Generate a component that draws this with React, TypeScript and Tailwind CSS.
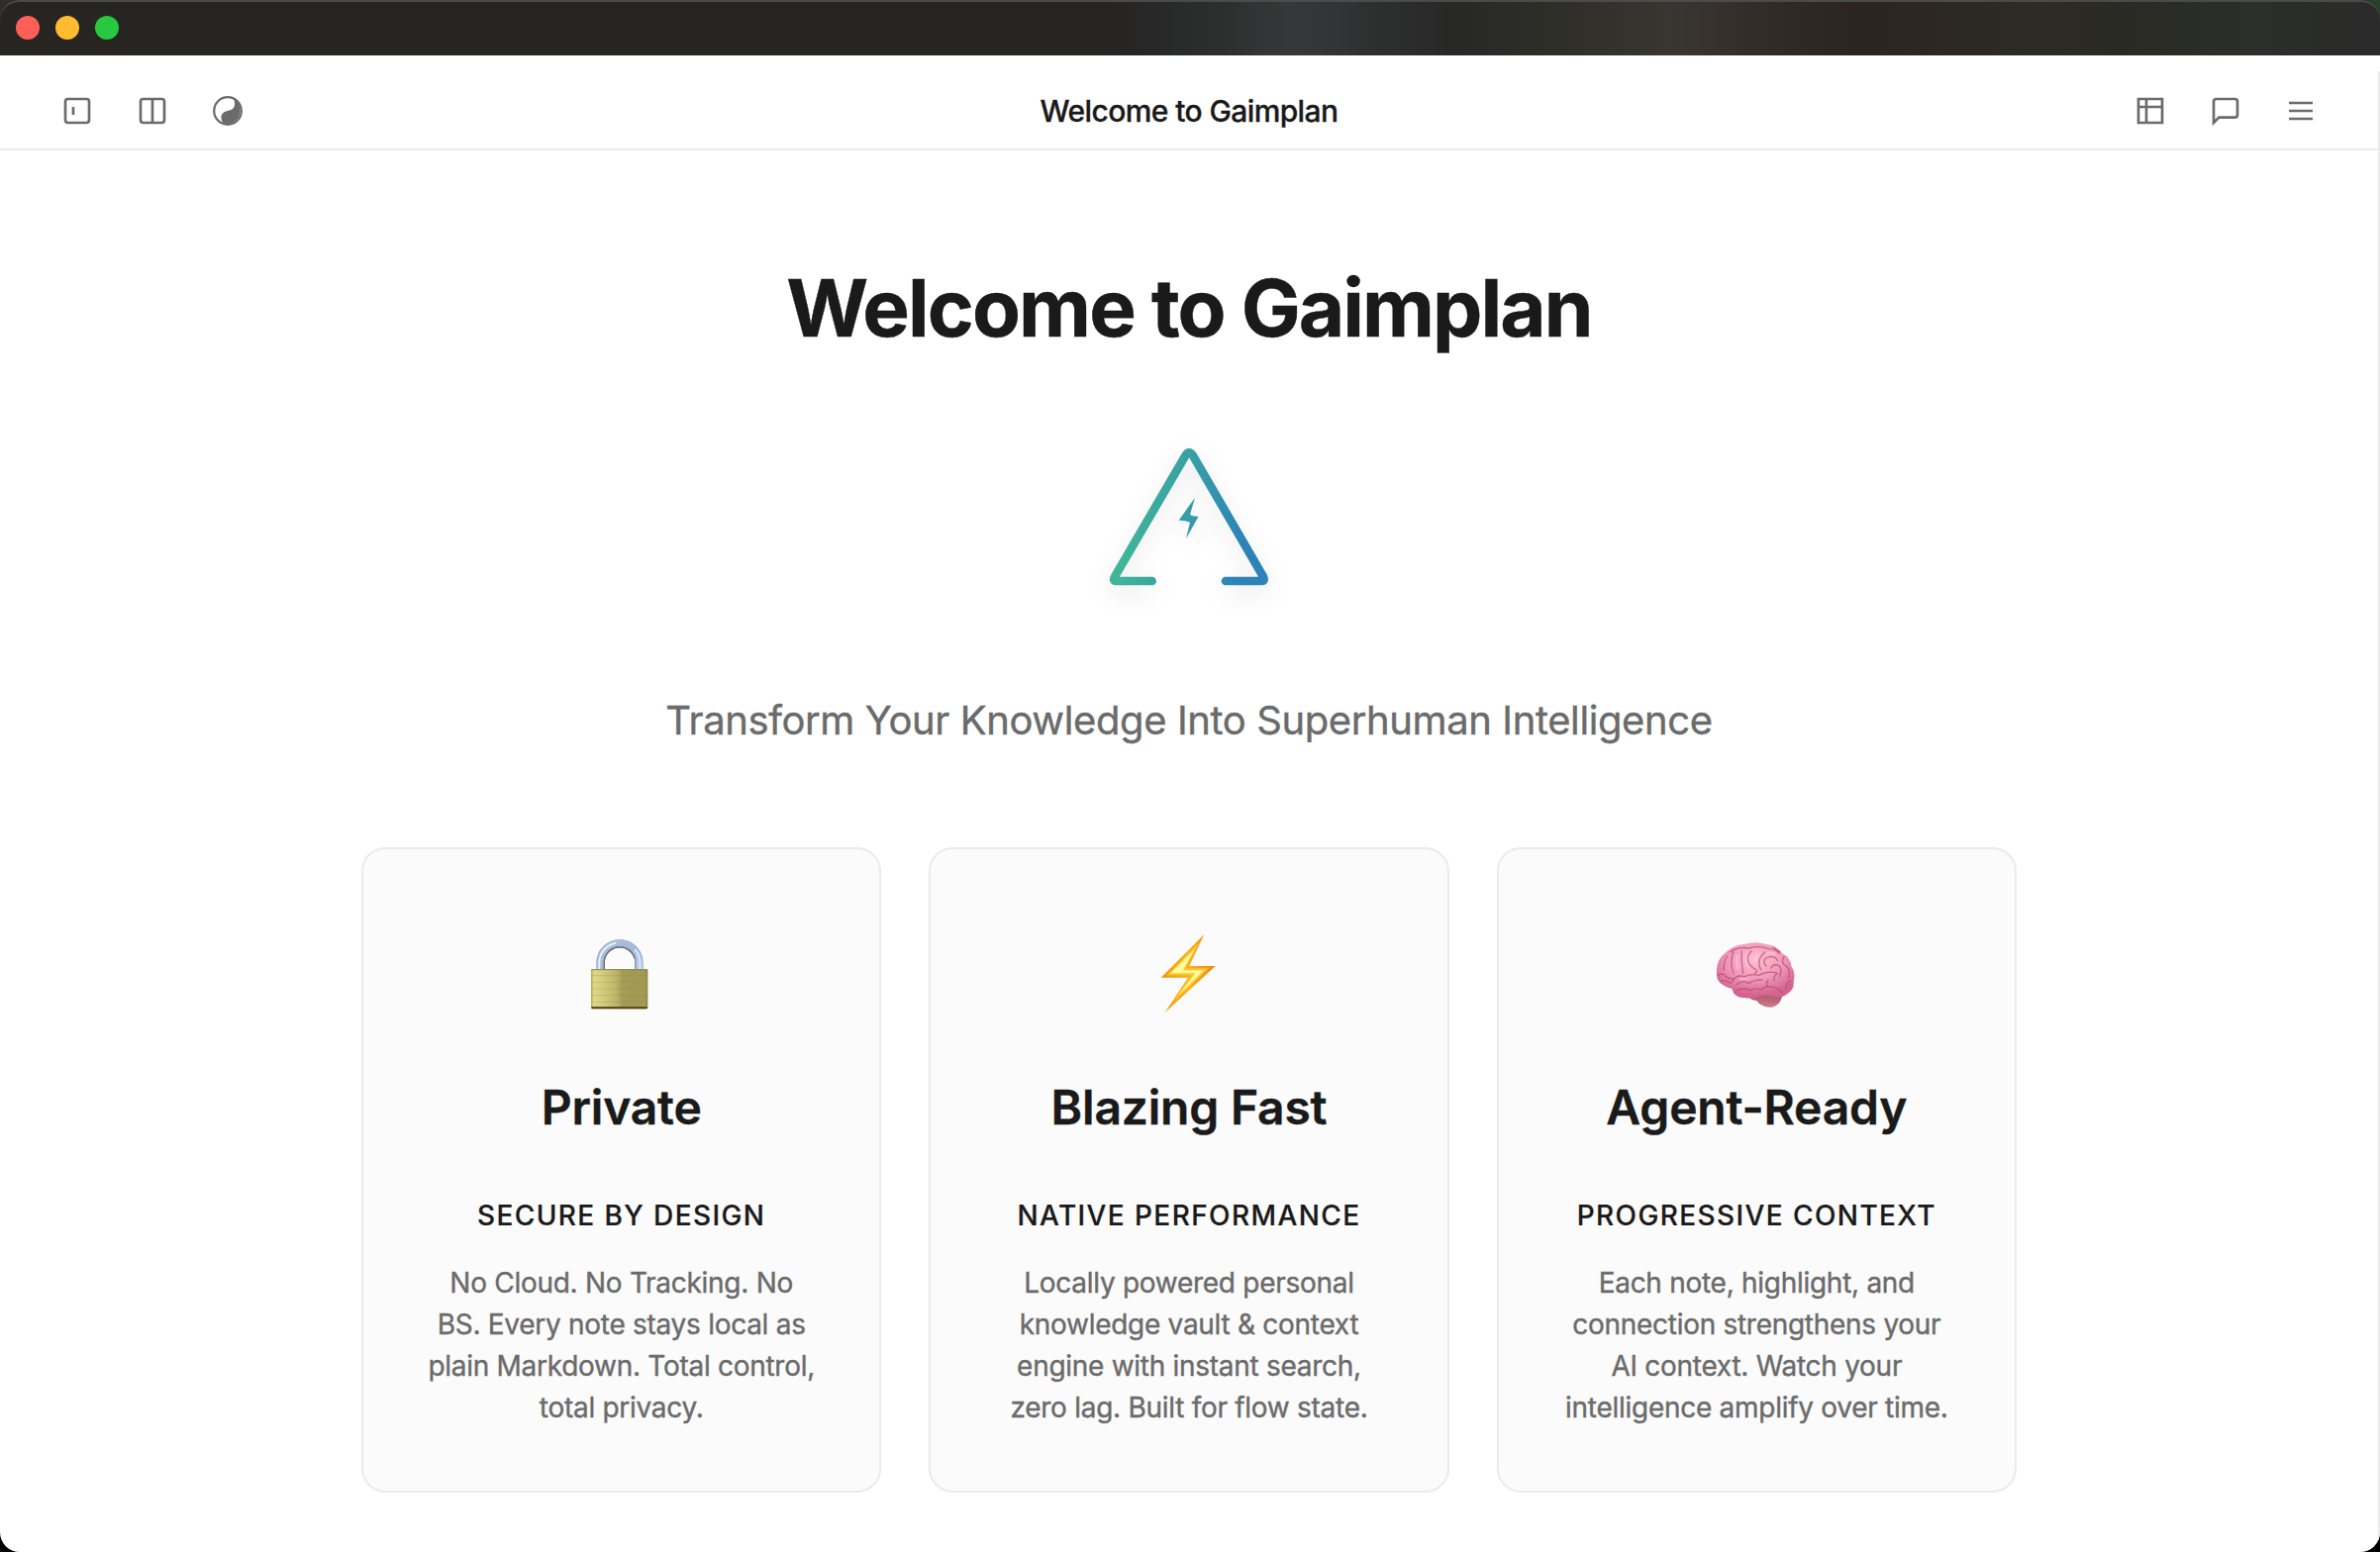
import type { ReactNode } from "react";

function Icon({ children }: { children: ReactNode }) {
  return (
    <button className="flex size-16 items-center justify-center text-[#6b6b6b]">
      <svg className="size-8" viewBox="0 0 24 24" fill="none" stroke="currentColor" strokeWidth="2">
        {children}
      </svg>
    </button>
  );
}

function TitleBar() {
  return (
    <div className="bg-[linear-gradient(90deg,#2e2e2e,#1c1c1c_50%,#26402a)]">
      <div className="flex h-14 items-center gap-4 rounded-t-[20px] border-t-2 border-[#4b4b49] bg-[linear-gradient(90deg,#262522_0px,#262522_1120px,#272728_1165px,#2d2f2e_1235px,#36373a_1300px,#343538_1330px,#2d2f2e_1395px,#272726_1470px,#2e2e28_1570px,#393530_1690px,#322d28_1770px,#2b241f_1870px,#2c2822_1980px,#2c2b24_2060px,#292a23_2140px,#2c2e2a_2280px,#2a2b2a_2380px)] px-4 pb-0.5">
        <span className="size-6 rounded-full bg-[#ff5f57]" />
        <span className="size-6 rounded-full bg-[#febc2e]" />
        <span className="size-6 rounded-full bg-[#28c840]" />
      </div>
    </div>
  );
}

function Header() {
  return (
    <header className="flex h-24 items-center justify-between border-b-2 border-[#ebebeb] pt-[18px] pr-[46px] pl-[46px]">
      <div className="flex gap-3">
        <Icon>
          <rect x="3" y="3" width="18" height="18" rx="2" />
          <path d="M9 9v6" />
        </Icon>
        <Icon>
          <rect x="3" y="3" width="18" height="18" rx="2" />
          <path d="M12 3v18" />
        </Icon>
        <Icon>
          <circle cx="12" cy="12" r="10.35" strokeWidth="1.7" />
          <path
            d="M15.3 2.2C17.8 3.6 17.8 8 16.4 9.8C15.3 11.3 13.6 11.6 12 12C9.5 12.4 7.2 14 7.1 16.8C7.1 18.5 7.7 20.2 9 21.9A10.4 10.4 0 0 0 15.3 2.2Z"
            fill="currentColor"
            stroke="none"
          />
        </Icon>
      </div>
      <span className="text-[30px] leading-9 font-medium tracking-[-0.02em] text-[#1a1a1a] [-webkit-text-stroke:0.3px]">
        Welcome to Gaimplan
      </span>
      <div className="flex gap-3">
        <Icon>
          <path d="M3 3h18v18H3zM3 9h18M9 3v18" />
        </Icon>
        <Icon>
          <path d="M21 15a2 2 0 0 1-2 2H7l-4 4V5a2 2 0 0 1 2-2h14a2 2 0 0 1 2 2z" />
        </Icon>
        <Icon>
          <path d="M3 6h18M3 12h18M3 18h18" />
        </Icon>
      </div>
    </header>
  );
}

function Logo() {
  return (
    <svg
      className="h-[220px] w-60 drop-shadow-[0_8px_12px_rgba(0,0,0,0.1)]"
      viewBox="0 0 720 660"
      fill="none"
    >
      <defs>
        <linearGradient id="brand" gradientUnits="userSpaceOnUse" x1="170" y1="370" x2="520" y2="430">
          <stop offset="0" stopColor="#40b598" />
          <stop offset="1" stopColor="#2d83b9" />
        </linearGradient>
      </defs>
      <g stroke="url(#brand)" strokeWidth="26" strokeLinecap="round" strokeLinejoin="round">
        <path d="M251 501H141Q132 500 138 488L352 121Q363 103 375 121L588 488Q593 500 585 501H474" />
      </g>
      <path d="M381 248L332 317Q352 317 366 323L354 373L392 305Q375 306 366 300Z" fill="url(#brand)" />
    </svg>
  );
}

function LockEmoji() {
  return (
    <svg className="ml-[3px] h-[120px] w-[140px]" viewBox="0 0 420 360" fill="none">
      <defs>
        <linearGradient id="brass" x1="0" x2="1">
          <stop offset="0" stopColor="#b3ab55" />
          <stop offset=".05" stopColor="#ded98a" />
          <stop offset=".2" stopColor="#d4cd7b" />
          <stop offset=".44" stopColor="#bcb56a" />
          <stop offset=".56" stopColor="#a49b57" />
          <stop offset=".95" stopColor="#a19a50" />
          <stop offset="1" stopColor="#8c8345" />
        </linearGradient>
        <linearGradient id="steel" x1="0" x2="1" y1="0" y2="1">
          <stop offset="0" stopColor="#aebfd8" />
          <stop offset=".5" stopColor="#a3b9de" />
          <stop offset="1" stopColor="#b9cdf0" />
        </linearGradient>
      </defs>
      <path d="M143 182V157A58 57 0 0 1 259 157V182" stroke="#7f8590" strokeWidth="25" />
      <path d="M142 182V157A59 59 0 0 1 260 157V182" stroke="url(#steel)" strokeWidth="20" />
      <path d="M139 180V157A61 61 0 0 1 190 98" stroke="#e9f1fb" strokeWidth="6" />
      <path d="M262 180V157Q261 133 247 118" stroke="#dbe7fb" strokeWidth="6" />
      <path d="M154 180V157A47 47 0 0 1 246 144" stroke="#6f6f70" strokeWidth="4" />
      <rect x="114" y="177" width="172" height="121" rx="4" fill="url(#brass)" />
      <path d="M116 179H284" stroke="#8f8848" strokeWidth="3" />
      <path d="M116 197H284M116 217H284M116 237H284M116 257H284M116 277H284" stroke="#8e8640" strokeOpacity=".25" strokeWidth="3" />
      <path d="M115 291H285V295Q285 298 280 298H120Q115 298 115 295Z" fill="#5d4d1f" />
    </svg>
  );
}

function BoltEmoji() {
  return (
    <svg className="mr-[2px] h-[120px] w-[120px]" viewBox="0 0 360 360" fill="none">
      <defs>
        <linearGradient id="flame" x1="0" x2="1">
          <stop offset="0" stopColor="#f5920c" />
          <stop offset=".5" stopColor="#fbb01e" />
          <stop offset="1" stopColor="#f7860c" />
        </linearGradient>
      </defs>
      <path d="M229 72L98 203H180L110 309L263 168H184Z" fill="url(#flame)" />
      <path d="M214 96L116 196H190L132 280L243 175H172Z" fill="#ffc72c" />
      <path d="M202 115L127 190H202L150 258L228 181H165Z" fill="#fffa9b" />
    </svg>
  );
}

function BrainEmoji() {
  return (
    <svg className="ml-[2px] h-[120px] w-[130px]" viewBox="0 0 390 360" fill="none">
      <defs>
        <radialGradient id="cortex" cx=".5" cy=".3" r=".65">
          <stop offset="0" stopColor="#fdbfd0" />
          <stop offset=".55" stopColor="#f09ab8" />
          <stop offset="1" stopColor="#d4628e" />
        </radialGradient>
        <linearGradient id="stem" x1="0" x2="0" y1="0" y2="1">
          <stop offset="0" stopColor="#9d4a5c" />
          <stop offset="1" stopColor="#cf7b88" />
        </linearGradient>
      </defs>
      <path d="M168 262Q180 274 192 272Q206 292 234 293Q262 291 270 262L230 240Z" fill="url(#stem)" />
      <path
        d="M72 190Q70 150 96 130Q120 104 156 102Q190 92 222 102Q256 106 270 130Q296 142 298 168Q312 188 305 214Q308 240 286 252Q272 266 246 261Q220 254 204 260Q178 268 150 264Q124 262 118 236Q94 232 80 216Q70 206 72 190Z"
        fill="url(#cortex)"
      />
      <g stroke="#b54876" strokeWidth="4" strokeLinecap="round" strokeOpacity=".7">
        <path d="M104 138Q92 156 94 180M122 126Q110 160 124 192M148 122Q146 150 152 190M178 122Q150 150 186 176Q200 184 188 190M206 180Q190 150 218 126M222 168Q204 146 234 140Q252 138 256 152M236 174Q246 158 262 168Q272 182 262 200" />
        <path d="M120 214Q132 192 156 200Q180 190 200 196Q228 180 256 190Q244 196 246 212M76 196Q90 186 100 200Q112 208 122 206M84 214Q98 208 116 220" />
        <path d="M132 224Q150 210 168 220Q190 208 210 210M132 242Q154 232 176 242Q190 232 206 240Q222 226 246 232Q262 236 270 250M276 140Q264 158 282 168Q298 180 290 204M296 212Q280 218 282 238M228 210Q220 220 226 228" />
        <path d="M112 126Q140 108 170 114Q200 104 228 116Q250 116 262 130M244 112Q252 120 266 126" />
      </g>
      <g stroke="#ffd0de" strokeWidth="6" strokeLinecap="round" strokeOpacity=".55">
        <path d="M134 138Q130 156 136 176M162 134Q158 150 166 170M194 132Q186 144 194 158M224 130Q238 124 248 132M144 208Q154 204 164 208" />
      </g>
    </svg>
  );
}

const features = [
  {
    art: <LockEmoji />,
    title: "Private",
    label: "Secure by Design",
    lines: ["No Cloud. No Tracking. No", "BS. Every note stays local as", "plain Markdown. Total control,", "total privacy."],
  },
  {
    art: <BoltEmoji />,
    title: "Blazing Fast",
    label: "Native Performance",
    lines: ["Locally powered personal", "knowledge vault & context", "engine with instant search,", "zero lag. Built for flow state."],
  },
  {
    art: <BrainEmoji />,
    title: "Agent-Ready",
    label: "Progressive Context",
    lines: ["Each note, highlight, and", "connection strengthens your", "AI context. Watch your", "intelligence amplify over time."],
  },
];

export default function App() {
  return (
    <div className="h-[1568px] w-[2404px] overflow-hidden bg-black font-['Inter',sans-serif] text-[#1a1a1a]">
      <TitleBar />
      <div className="flex h-[1512px] overflow-hidden rounded-b-[20px] bg-white">
        <div className="w-[2402px]">
          <Header />
          <main className="flex flex-col items-center pt-[111px] [-webkit-text-stroke:0.4px]">
            <h1 className="text-[80px] leading-24 font-bold tracking-[-1.93px]">Welcome to Gaimplan</h1>
            <div className="mt-[61px] mr-[2px]">
              <Logo />
            </div>
            <p className="mt-[64px] text-[40px] leading-12 tracking-[-0.01em] text-[#6b6b6b]">
              Transform Your Knowledge Into Superhuman Intelligence
            </p>
            <div className="mt-[104px] grid w-[1672px] grid-cols-3 gap-12">
              {features.map((f) => (
                <section
                  key={f.title}
                  className="flex h-[652px] flex-col items-center rounded-3xl border-2 border-[#ebebeb] bg-[#fbfbfb] pt-[62px] text-center"
                >
                  {f.art}
                  <h2 className="mt-[50px] text-[48px] leading-[58px] font-semibold tracking-[-0.2px]">{f.title}</h2>
                  <h3 className="mt-[59px] text-[28px] leading-[42px] font-medium tracking-[0.05em] uppercase [-webkit-text-stroke:0.2px]">
                    {f.label}
                  </h3>
                  <p className="mt-[26px] text-[28px] leading-[42px] tracking-[-0.01em] text-[#6b6b6b]">
                    {f.lines.map((line) => (
                      <span key={line} className="block whitespace-nowrap">
                        {line}
                      </span>
                    ))}
                  </p>
                </section>
              ))}
            </div>
          </main>
        </div>
        <div className="mt-4 w-0.5 bg-[#ebebeb]" />
      </div>
    </div>
  );
}
